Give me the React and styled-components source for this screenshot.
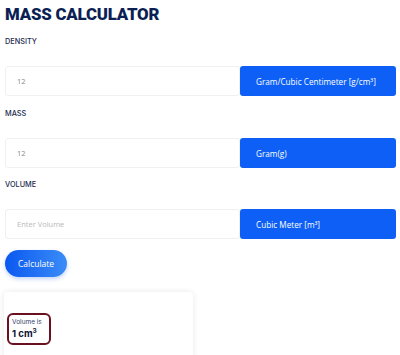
import React from 'react';
import styled, { createGlobalStyle } from 'styled-components';

const GlobalStyle = createGlobalStyle`
  body {
    margin: 0;
    background: #fff;
    font-family: "Open Sans", "Liberation Sans", sans-serif;
  }
`;

const Page = styled.div`
  width: 400px;
  height: 355px;
  overflow: hidden;
  padding: 0 4px 0 5px;
  box-sizing: border-box;
`;

const Title = styled.h1`
  margin: 0;
  padding-top: 4px;
  font-family: Roboto, sans-serif;
  font-size: 16.8px;
  font-weight: 900;
  letter-spacing: -0.2px;
  line-height: 20px;
  color: #0b1f55;
`;

const Label = styled.div`
  margin-top: ${(p) => p.$top}px;
  font-family: Inter, sans-serif;
  font-size: 7.3px;
  font-weight: 500;
  color: #1d2b4f;
  line-height: 10px;
`;

const Row = styled.div`
  display: flex;
  margin-top: 19px;
  height: 30px;
`;

const Input = styled.input`
  flex: 0 0 235px;
  box-sizing: border-box;
  border: 1px solid #f0f0f0;
  border-radius: 3px;
  padding: 0 11px;
  font-family: "Open Sans", sans-serif;
  font-size: 7.5px;
  color: #888;
  outline: none;
  &::placeholder {
    color: #b8b8b8;
  }
`;

const Select = styled.div`
  flex: 1;
  display: flex;
  align-items: center;
  padding-left: 16px;
  background: #0d5ff5;
  border-radius: 3px;
  font-family: "Open Sans", sans-serif;
  font-size: 8.2px;
  color: #fff;
`;

const Button = styled.button`
  margin-top: 11px;
  width: 62px;
  height: 27px;
  border: none;
  border-radius: 14px;
  background: linear-gradient(90deg, #0a58f0, #3b8cf7);
  color: #fff;
  font-family: "Open Sans", sans-serif;
  font-size: 8.5px;
  padding: 0;
  box-shadow: 0 2px 4px rgba(10, 80, 220, 0.25);
`;

const Card = styled.div`
  margin-top: 15px;
  margin-left: -1px;
  width: 189px;
  height: 70px;
  box-sizing: border-box;
  padding: 21px 0 0 3px;
  border-radius: 4px;
  box-shadow: 0 0 6px rgba(0, 0, 0, 0.09);
`;

const Result = styled.div`
  display: inline-block;
  box-sizing: border-box;
  width: 44px;
  height: 32px;
  padding: 3px 0 0 3px;
  border: 2px solid #6a1020;
  border-radius: 6px;
`;

const ResultLabel = styled.div`
  font-family: Inter, sans-serif;
  font-size: 6.5px;
  color: #34406a;
  line-height: 9px;
`;

const ResultValue = styled.div`
  font-family: Inter, sans-serif;
  font-size: 9.5px;
  font-weight: 700;
  color: #0b1233;
  line-height: 13px;
  sup {
    font-size: 6.5px;
    vertical-align: 4px;
    line-height: 0;
  }
`;

const fields = [
  { label: 'DENSITY', value: '12', unit: 'Gram/Cubic Centimeter [g/cm³]', top: 13 },
  { label: 'MASS', value: '12', unit: 'Gram(g)', top: 13 },
  { label: 'VOLUME', placeholder: 'Enter Volume', unit: 'Cubic Meter [m³]', top: 12 },
];

export default function App() {
  return (
    <Page>
      <GlobalStyle />
      <Title>MASS CALCULATOR</Title>
      {fields.map((f) => (
        <React.Fragment key={f.label}>
          <Label $top={f.top}>{f.label}</Label>
          <Row>
            <Input defaultValue={f.value} placeholder={f.placeholder} />
            <Select>{f.unit}</Select>
          </Row>
        </React.Fragment>
      ))}
      <Button>Calculate</Button>
      <Card>
        <Result>
          <ResultLabel>Volume is</ResultLabel>
          <ResultValue>
            1 cm<sup>3</sup>
          </ResultValue>
        </Result>
      </Card>
    </Page>
  );
}
